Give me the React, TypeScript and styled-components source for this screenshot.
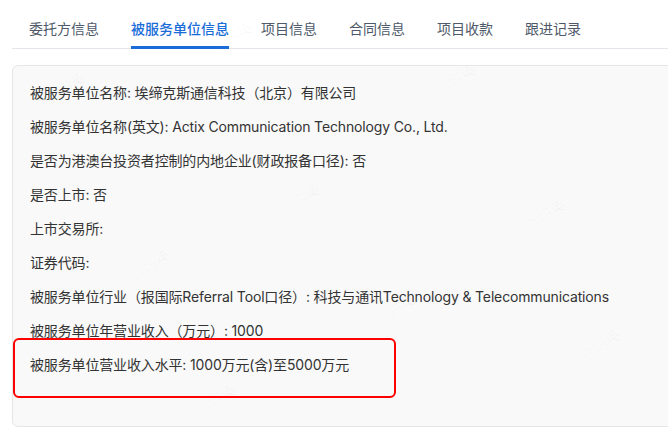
import React from "react";
import styled, { createGlobalStyle } from "styled-components";

const Global = createGlobalStyle`
  html, body { margin: 0; padding: 0; background: #ffffff; overflow: hidden; }
  body {
    font-family: Inter, "Noto Sans CJK SC", "Noto Sans", sans-serif;
    -webkit-font-smoothing: antialiased;
  }
`;

const Page = styled.div`
  position: relative;
  width: 668px;
  height: 435px;
  overflow: hidden;
  padding: 0 0 0 12px;
  box-sizing: border-box;
`;

const TabBar = styled.div`
  display: flex;
  gap: 32px;
  width: 700px;
  padding-left: 17px;
  border-bottom: 1px solid #e5e6eb;
  box-sizing: border-box;
  height: 49px;
`;

const Tab = styled.div<{ $active?: boolean }>`
  position: relative;
  display: flex;
  align-items: center;
  height: 48px;
  padding-top: 8px;
  box-sizing: border-box;
  font-size: 14px;
  color: ${(p) => (p.$active ? "#1a6dd8" : "#4e5969")};
  font-weight: ${(p) => (p.$active ? 500 : 400)};
  white-space: nowrap;
  &::after {
    content: "";
    display: ${(p) => (p.$active ? "block" : "none")};
    position: absolute;
    left: 0;
    right: 0;
    bottom: -1px;
    height: 3px;
    background: #1a6dd8;
  }
`;

const Card = styled.div`
  position: relative;
  margin-top: 16px;
  width: 720px;
  background: #f9f9f9;
  border: 1px solid #e6e6e6;
  border-radius: 6px;
  padding: 10px 17px 44px;
  box-sizing: border-box;
  display: flex;
  flex-direction: column;
`;

const Row = styled.div`
  height: 34px;
  line-height: 34px;
  font-size: 14px;
  letter-spacing: -0.15px;
  color: #333333;
  white-space: nowrap;
`;

const Highlight = styled.div`
  position: absolute;
  left: 0;
  top: 272px;
  width: 383px;
  height: 60px;
  border: 2.5px solid #ff0000;
  border-radius: 6px;
  box-sizing: border-box;
  pointer-events: none;
`;

const Watermark = styled.span`
  position: absolute;
  font-size: 15px;
  color: rgba(0, 0, 0, 0.03);
  transform: translate(-50%, -50%) rotate(-35deg);
  pointer-events: none;
  white-space: nowrap;
  font-family: "Noto Sans CJK SC", sans-serif;
`;

const rows = [
  "被服务单位名称: 埃缔克斯通信科技（北京）有限公司",
  "被服务单位名称(英文): Actix Communication Technology Co., Ltd.",
  "是否为港澳台投资者控制的内地企业(财政报备口径): 否",
  "是否上市: 否",
  "上市交易所:",
  "证券代码:",
  "被服务单位行业（报国际Referral Tool口径）: 科技与通讯Technology & Telecommunications",
  "被服务单位年营业收入（万元）: 1000",
  "被服务单位营业收入水平: 1000万元(含)至5000万元",
];

const tabs = ["委托方信息", "被服务单位信息", "项目信息", "合同信息", "项目收款", "跟进记录"];

const marks: [number, number][] = [
  [232, 38],
  [455, 80],
  [65, 88],
  [300, 200],
  [545, 215],
  [150, 265],
  [395, 310],
  [600, 345],
  [215, 400],
];

export default function App() {
  return (
    <>
      <Global />
      <Page>
        <TabBar>
          {tabs.map((t, i) => (
            <Tab key={t} $active={i === 1}>
              {t}
            </Tab>
          ))}
        </TabBar>
        <Card>
          {rows.map((r) => (
            <Row key={r}>{r}</Row>
          ))}
          <Highlight />
        </Card>
        {marks.map(([x, y], i) => (
          <Watermark key={i} style={{ left: x, top: y }}>
            高巧英
          </Watermark>
        ))}
      </Page>
    </>
  );
}
